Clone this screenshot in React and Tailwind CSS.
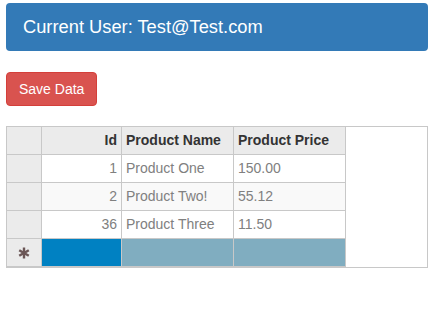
import React from "react";

const rows = [
  { id: 1, name: "Product One", price: "150.00" },
  { id: 2, name: "Product Two!", price: "55.12" },
  { id: 36, name: "Product Three", price: "11.50" },
];

function Cell({ className = "", children }) {
  return (
    <div className={`h-[28px] flex items-center border-r border-b border-[#c8c8c8] ${className}`}>
      {children}
    </div>
  );
}

export default function App() {
  return (
    <div className="w-[435px] h-[319px] bg-white px-[6px] pt-[3px] font-['Liberation_Sans',Arial,sans-serif]">
      {/* Header panel */}
      <div className="w-[422px] h-[48px] rounded-[4px] bg-[#337ab7] flex items-center pl-[17px] text-white text-[18.3px]">
        Current User: Test@Test.com
      </div>

      <button className="mt-[21px] h-[34px] px-[12px] rounded-[4px] bg-[#d9534f] border border-[#d43f3a] text-white text-[14px]">
        Save Data
      </button>

      {/* Grid */}
      <div className="mt-[20px] w-[422px] h-[142px] border border-[#c8c8c8] text-[14px]">
        <div className="grid grid-cols-[35px_80px_112px_112px]">
          <Cell className="bg-[#ebebeb]" />
          <Cell className="bg-[#ebebeb] justify-end pr-[4px] font-bold text-[#333]">Id</Cell>
          <Cell className="bg-[#ebebeb] pl-[4px] font-bold text-[#333]">Product Name</Cell>
          <Cell className="bg-[#ebebeb] pl-[4px] font-bold text-[#333]">Product Price</Cell>

          {rows.map((r, i) => {
            const bg = i % 2 === 1 ? "bg-[#f9f9f9]" : "bg-white";
            return (
              <React.Fragment key={r.id}>
                <Cell className="bg-[#ebebeb]" />
                <Cell className={`${bg} justify-end pr-[4px] text-[#808080]`}>{r.id}</Cell>
                <Cell className={`${bg} pl-[4px] text-[#808080]`}>{r.name}</Cell>
                <Cell className={`${bg} pl-[4px] text-[#808080]`}>{r.price}</Cell>
              </React.Fragment>
            );
          })}

          {/* new row template */}
          <Cell className="bg-[#ebebeb] justify-center">
            <svg width="12" height="12" viewBox="0 0 12 12" stroke="#6b5656" strokeWidth="2.4" strokeLinecap="butt">
              <line x1="6" y1="0.5" x2="6" y2="11.5" />
              <line x1="1.2" y1="3.2" x2="10.8" y2="8.8" />
              <line x1="1.2" y1="8.8" x2="10.8" y2="3.2" />
            </svg>
          </Cell>
          <Cell className="bg-[#0081c2]" />
          <Cell className="bg-[#80adc0]" />
          <Cell className="bg-[#80adc0]" />
        </div>
      </div>
    </div>
  );
}
